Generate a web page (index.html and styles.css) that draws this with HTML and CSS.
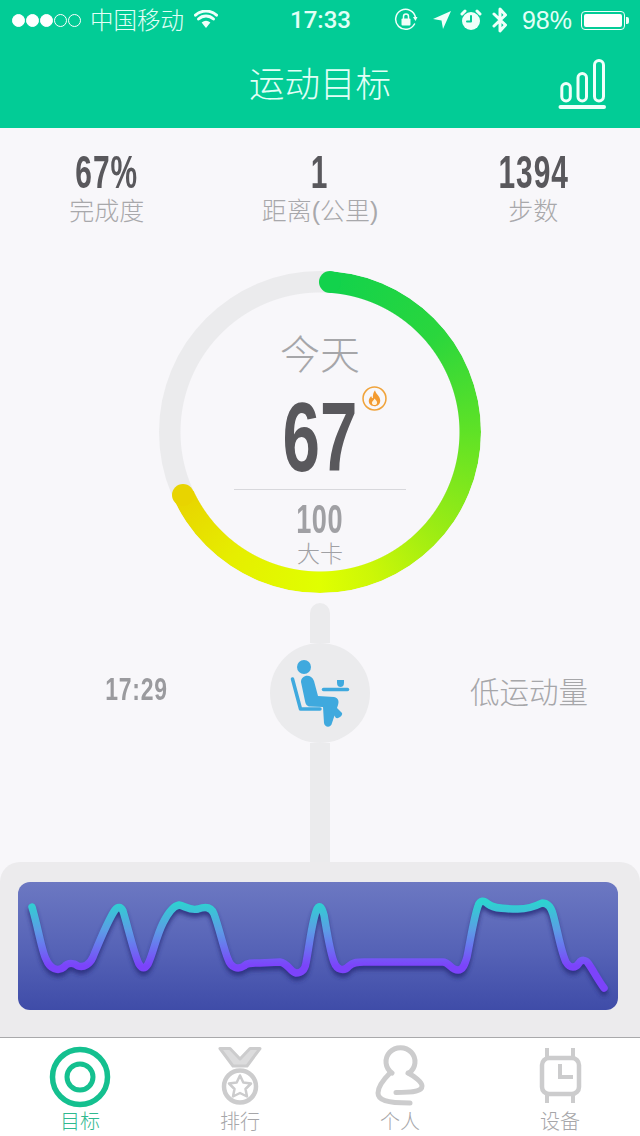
FILE: index.html
```html
<html>
<head>
  <title>运动目标</title>
  <meta charset="utf-8">
  <link rel="stylesheet" href="styles.css">
</head>
<body>
  <div class="page">
    <div class="top">
      <div class="status">
        <div class="status-left">
          <span class="dot on"></span><span class="dot on"></span><span class="dot on"></span><span class="dot"></span><span class="dot"></span>
          <span class="carrier">中国移动</span>
          <svg class="wifi" viewBox="0 0 24 18"><path d="M12 18 L7.6 12.6 A7 7 0 0 1 16.400 12.600 Z"/><path class="line" d="M4.500 9 A11 11 0 0 1 19.500 9"/><path class="line" d="M1.500 5.200 A15.500 15.500 0 0 1 22.500 5.200"/></svg>
        </div>
        <div class="clock">17:33</div>
        <div class="status-right">
          <svg class="st-icon st-rotate" width="24" height="24" viewBox="0 0 24 24"><path class="line thin" d="M20.500 16 A10 10 0 1 1 21.500 9.500"/><path d="M23.500 9 L19 9 L21.500 13 Z"/><rect x="7.500" y="10.500" width="9" height="7" rx="1"/><path class="line thin" d="M9.500 10.500 V8.500 A2.500 2.500 0 0 1 14.500 8.500 V10.500"/></svg>
          <svg class="st-icon st-arrow" width="20" height="20" viewBox="0 0 20 20"><path d="M19 1 L11 19 L9.500 10.500 L1 9 Z"/></svg>
          <svg class="st-icon st-alarm" width="22" height="22" viewBox="0 0 22 22"><circle cx="11" cy="12" r="9"/><path class="line teal" d="M11 7 V12.500 H7"/><path class="line" d="M2 5 L5 2 M20 5 L17 2"/></svg>
          <svg class="st-icon st-blue" width="16" height="26" viewBox="0 0 16 26"><path class="line" d="M2 7 L13.500 18 L8 24 V2 L13.500 8 L2 19"/></svg>
          <span class="percent">98%</span>
          <div class="battery"><div class="battery-fill"></div></div>
          <div class="battery-nub"></div>
        </div>
      </div>
      <div class="header">
        <h1>运动目标</h1>
        <svg class="chart-btn" viewBox="558 56 48 54"><rect class="line" x="561.800" y="83.500" width="8.500" height="17.500" rx="4.250"/><rect class="line" x="578" y="73.500" width="8.500" height="27.500" rx="4.250"/><rect class="line" x="594.500" y="60.500" width="9" height="40.500" rx="4.500"/><path class="line bold" d="M560.500 107 H604"/></svg>
      </div>
    </div>

    <div class="stats">
      <div class="stat"><div class="num">67%</div><div class="label">完成度</div></div>
      <div class="stat"><div class="num">1</div><div class="label">距离(公里)</div></div>
      <div class="stat"><div class="num">1394</div><div class="label">步数</div></div>
    </div>

    <div class="ring">
      <div class="ring-arc"></div>
      <div class="cap cap-start"></div>
      <div class="cap cap-end"></div>
      <div class="today">今天</div>
      <div class="big">
        <span class="big-num">67</span>
        <svg class="badge" viewBox="0 0 24 24"><circle class="badge-ring" cx="12" cy="12" r="11"/><path class="flame" d="M12.500 4 C13 7.500 17.500 9.500 17.500 14 C17.500 17.500 15 19.500 12 19.500 C9 19.500 6.500 17.500 6.500 14.500 C6.500 12 8 10.500 8.800 9.500 C9.200 11 9.800 11.500 10.500 11.800 C10.200 9 10.800 6 12.500 4 Z"/><path class="flame-in" d="M12 12 C13 13.500 14.500 14.500 14.500 16 C14.500 17.500 13.300 18.300 12 18.300 C10.700 18.300 9.500 17.500 9.500 16 C9.500 14.500 11.500 14 12 12 Z"/></svg>
      </div>
      <div class="ring-line"></div>
      <div class="goal">100</div>
      <div class="unit">大卡</div>
    </div>

    <div class="timeline">
      <div class="time">17:29</div>
      <div class="track">
        <div class="bar bar-top"></div>
        <div class="node">
          <svg class="sit" viewBox="270 642 100 100">
            <circle cx="304" cy="666" r="7"/>
            <path d="M301 681 C301 674 311 672 314 680 L318 695 L334 696 C339 697 339 701 338 704 L332 722 C331 727 325 727 324 722 L323 706 L310 705.500 C307 705.500 305.500 703 305 700 Z"/>
            <path d="M333 703 L342 712 C343 714 339 718 336 717 L331 710 Z"/>
            <path class="sit-line" d="M292.500 678 L300.500 708 H320"/>
            <path class="sit-line" d="M323.500 688.500 H347.500"/>
            <path d="M337 679 H344 V682 C344 685 342 686 340.500 686 C339 686 337 685 337 682 Z"/>
          </svg>
        </div>
        <div class="bar bar-bottom"></div>
      </div>
      <div class="activity">低运动量</div>
    </div>

    <div class="panel">
      <div class="graph">
        <svg class="graph-svg" viewBox="0 0 600 128">
          <defs>
            <linearGradient id="wave" gradientUnits="userSpaceOnUse" x1="0" y1="20" x2="0" y2="84">
              <stop offset="0" stop-color="#2dd3d0"/>
              <stop offset="0.45" stop-color="#5c9ce6"/>
              <stop offset="1" stop-color="#7c43fb"/>
            </linearGradient>
            <filter id="soft" x="-5%" y="-20%" width="110%" height="140%"><feGaussianBlur stdDeviation="2"/></filter>
          </defs>
          <path class="wave-shadow" filter="url(#soft)" d="M14 25 C20 45 24 70 28 77 C32 87 40 90 46 85 C50 80 56 81 60 84 C66 86 72 82 75 75 C82 58 90 38 97 28 C100 24 103 25 105 29 C110 45 116 72 121 82 C124 87 127 87 130 82 C135 72 138 55 145 41 C150 31 155 24 161 23 C167 24 172 29 180 27 C186 25 193 24 196 32 C201 45 206 68 210 77 C213 86 220 88 226 84 C230 80 236 81 242 81 L262 80 C270 81 272 90 278 91 C284 91 287 87 288 81 C292 60 294 38 299 27 C302 22 304 26 306 33 C309 50 312 70 316 80 C319 88 326 90 331 84 C335 80 340 80 346 80 L425 80 C431 80 433 88 440 88 C445 88 447 82 449 75 C453 55 456 35 460 24 C462 18 466 18 470 22 C476 27 490 27 500 27 C510 27 518 24 524 21 C530 21 533 25 535 32 C540 50 543 70 548 80 C552 87 558 86 561 81 C564 77 568 78 570 81 C575 88 580 98 586 106"/>
          <path class="wave-line" d="M14 25 C20 45 24 70 28 77 C32 87 40 90 46 85 C50 80 56 81 60 84 C66 86 72 82 75 75 C82 58 90 38 97 28 C100 24 103 25 105 29 C110 45 116 72 121 82 C124 87 127 87 130 82 C135 72 138 55 145 41 C150 31 155 24 161 23 C167 24 172 29 180 27 C186 25 193 24 196 32 C201 45 206 68 210 77 C213 86 220 88 226 84 C230 80 236 81 242 81 L262 80 C270 81 272 90 278 91 C284 91 287 87 288 81 C292 60 294 38 299 27 C302 22 304 26 306 33 C309 50 312 70 316 80 C319 88 326 90 331 84 C335 80 340 80 346 80 L425 80 C431 80 433 88 440 88 C445 88 447 82 449 75 C453 55 456 35 460 24 C462 18 466 18 470 22 C476 27 490 27 500 27 C510 27 518 24 524 21 C530 21 533 25 535 32 C540 50 543 70 548 80 C552 87 558 86 561 81 C564 77 568 78 570 81 C575 88 580 98 586 106"/>
        </svg>
      </div>
    </div>

    <div class="tabs">
      <div class="tab active">
        <svg class="tab-icon" viewBox="40 1040 80 72"><circle class="tab-line" cx="80" cy="1077" r="27.500"/><circle class="tab-line inner" cx="80" cy="1077" r="13"/></svg>
        <div class="tab-label">目标</div>
      </div>
      <div class="tab">
        <svg class="tab-icon" viewBox="200 1040 80 72"><path class="tab-line medal" d="M220 1048.500 H230 L240 1059 L250 1048.500 H260 L247 1066 H233 Z"/><circle class="tab-line" cx="240" cy="1086.500" r="16"/><path class="tab-line star" d="M240 1075.500 L243.300 1082.500 L251 1083.500 L245.500 1089 L247 1096.500 L240 1093 L233 1096.500 L234.500 1089 L229 1083.500 L236.700 1082.500 Z"/></svg>
        <div class="tab-label">排行</div>
      </div>
      <div class="tab">
        <svg class="tab-icon" viewBox="360 1040 80 72"><path class="tab-line person" d="M392 1073 A14.500 14 0 1 1 409 1073"/><path class="tab-line person" d="M408 1073 C414 1076 422 1082 422 1086 C422 1091 415 1092.500 396 1092.500"/><path class="tab-line person" d="M390 1073 C384 1079 378 1087 378 1093 C378 1100 386 1103 410 1103"/></svg>
        <div class="tab-label">个人</div>
      </div>
      <div class="tab">
        <svg class="tab-icon" viewBox="520 1040 80 72"><path class="tab-line watch" d="M547 1048 V1058 M573 1048 V1058 M547 1093 V1103 M573 1093 V1103"/><rect class="tab-line" x="542" y="1058" width="37" height="36" rx="7"/><path class="tab-line watch-hand" d="M560 1064 V1077 H573"/></svg>
        <div class="tab-label">设备</div>
      </div>
    </div>
  </div>
</body>
</html>
```

FILE: styles.css
```css
* {
  box-sizing: border-box;
}

body {
  margin: 0;
  background-color: #f8f7fa;
  font-family: "Liberation Sans", "Noto Sans CJK SC", sans-serif;
}

.page {
  width: 640px;
  height: 1136px;
  display: flex;
  flex-direction: column;
  overflow: hidden;
}

.top {
  height: 128px;
  background-color: #02cc96;
  color: #e2fff6;
}

.status {
  height: 40px;
  padding: 0 11px 0 12px;
  display: flex;
  align-items: center;
}

.status-left,
.status-right {
  flex: 1;
  display: flex;
  align-items: center;
}

.status-right {
  justify-content: flex-end;
}

.dot {
  width: 13px;
  height: 13px;
  margin-right: 1px;
  border: 1px solid #fff;
  border-radius: 50%;
}

.dot.on {
  background-color: #fff;
}

.carrier {
  margin: -2px 0 0 8px;
  font-size: 23.500px;
  font-weight: 300;
}

.wifi {
  width: 24px;
  height: 18px;
  margin: -2px 0 0 10px;
  fill: #f0fffa;
}

.line {
  fill: none;
  stroke: #f0fffa;
  stroke-width: 3;
  stroke-linecap: round;
  stroke-linejoin: round;
}

.line.thin {
  stroke-width: 1.500;
}

.line.bold {
  stroke-width: 4;
}

.line.teal {
  stroke: #02cc96;
  stroke-width: 2;
}

.clock {
  font-family: Roboto, sans-serif;
  font-size: 24px;
  font-weight: 500;
}

.st-icon {
  fill: #f0fffa;
}

.st-rotate {
  margin-right: 14px;
}

.st-arrow {
  margin-right: 8px;
}

.st-alarm {
  margin-right: 10px;
}

.st-blue {
  margin-right: 13px;
}

.percent {
  margin: 0 9px 0 1px;
  font-size: 25px;
}

.battery {
  width: 44px;
  height: 19px;
  padding: 2px;
  border: 1px solid #f0fffa;
  border-radius: 4px;
}

.battery-fill {
  height: 100%;
  border-radius: 2px;
  background-color: #fff;
}

.battery-nub {
  width: 3px;
  height: 7px;
  margin-left: 1px;
  border-radius: 0 2px 2px 0;
  background-color: #f0fffa;
}

.header {
  position: relative;
  height: 88px;
  display: flex;
  align-items: center;
  justify-content: center;
}

.header h1 {
  margin: 0 0 6px;
  font-size: 35.500px;
  font-weight: 300;
}

.chart-btn {
  position: absolute;
  left: 558px;
  top: 16px;
  width: 48px;
  height: 54px;
}

.stats {
  height: 143px;
  padding-top: 22px;
  display: grid;
  grid-template-columns: repeat(3, 1fr);
  text-align: center;
}

.num {
  height: 44px;
  font-size: 46px;
  font-weight: bold;
  line-height: 44px;
  letter-spacing: 1.500px;
  color: #59585c;
  transform: scaleX(0.65);
}

.label {
  font-size: 25px;
  font-weight: 300;
  line-height: 34px;
  color: #a8a8ab;
}

.ring {
  position: relative;
  flex: none;
  width: 322px;
  height: 322px;
  margin: 0 auto;
  padding-top: 58px;
  display: flex;
  flex-direction: column;
  align-items: center;
  border-radius: 50%;
  background: radial-gradient(closest-side, #f8f7fa 139px, #ebebed 140px);
}

.ring-arc {
  position: absolute;
  inset: 0;
  border-radius: 50%;
  background: conic-gradient(transparent 4deg, #12d24c 4deg, #2ad63d 50deg, #5fe226 90deg, #9bec14 130deg, #ccf707 160deg, #e0ff00 180deg, #e6ee00 215deg, #e8d400 245deg, transparent 245deg);
  -webkit-mask: radial-gradient(closest-side, transparent 139px, #000 140px);
  mask: radial-gradient(closest-side, transparent 139px, #000 140px);
}

.cap {
  position: absolute;
  width: 22px;
  height: 22px;
  border-radius: 50%;
}

.cap-start {
  left: 160px;
  top: 0;
  background-color: #12d24c;
}

.cap-end {
  left: 13px;
  top: 213px;
  background-color: #e8d400;
}

.today {
  font-size: 40px;
  font-weight: 300;
  line-height: 52px;
  color: #a6a6a9;
}

.big {
  position: relative;
  height: 96px;
  margin-top: 8px;
}

.big-num {
  display: block;
  font-size: 99px;
  font-weight: bold;
  line-height: 96px;
  color: #59585c;
  transform: scaleX(0.68);
}

.badge {
  position: absolute;
  left: 97px;
  top: -3px;
  width: 25px;
  height: 25px;
}

.badge-ring {
  fill: none;
  stroke: #f0a43c;
  stroke-width: 1.500;
}

.flame {
  fill: #f39a30;
}

.flame-in {
  fill: #fff3dd;
}

.ring-line {
  width: 172px;
  height: 1px;
  margin-top: 4px;
  background-color: #d8d8dc;
}

.goal {
  margin-top: 9px;
  font-size: 41px;
  font-weight: bold;
  line-height: 40px;
  letter-spacing: 1px;
  color: #a0a0a4;
  transform: scaleX(0.66);
}

.unit {
  margin-top: 2px;
  font-size: 23px;
  font-weight: 300;
  line-height: 26px;
  color: #a0a0a4;
}

.timeline {
  flex: 1;
  margin-top: 10px;
  display: grid;
  grid-template-columns: 1fr 100px 1fr;
}

.time {
  margin-top: 67px;
  padding-left: 4px;
  height: 40px;
  font-size: 31px;
  font-weight: bold;
  line-height: 40px;
  letter-spacing: 1px;
  text-align: center;
  color: #9a9a9e;
  transform: scaleX(0.74);
}

.activity {
  margin-top: 68px;
  padding-left: 100px;
  height: 44px;
  font-size: 29.500px;
  font-weight: 300;
  line-height: 44px;
  color: #a6a6a9;
}

.track {
  display: flex;
  flex-direction: column;
  align-items: center;
}

.bar {
  width: 20px;
  background-color: #ebebed;
}

.bar-top {
  height: 40px;
  border-radius: 10px 10px 0 0;
}

.bar-bottom {
  flex: 1;
}

.node {
  width: 100px;
  height: 100px;
  border-radius: 50%;
  background-color: #ebebed;
}

.sit {
  display: block;
  width: 100px;
  height: 100px;
  fill: #3fa9de;
}

.sit-line {
  fill: none;
  stroke: #3fa9de;
  stroke-width: 3.500;
  stroke-linecap: round;
  stroke-linejoin: round;
}

.panel {
  height: 175px;
  padding: 20px 22px 27px 18px;
  border-radius: 20px 20px 0 0;
  background-color: #ecebed;
}

.graph {
  height: 128px;
  border-radius: 12px;
  background: linear-gradient(#6c78c2, #5562b6 55%, #3f4ca8);
}

.graph-svg {
  display: block;
  width: 600px;
  height: 128px;
}

.wave-line,
.wave-shadow {
  fill: none;
  stroke-width: 7.500;
  stroke-linecap: round;
  stroke-linejoin: round;
}

.wave-line {
  stroke: url(#wave);
}

.wave-shadow {
  stroke: #262a78;
  opacity: 0.8;
  transform: translateY(4px);
}

.tabs {
  height: 99px;
  display: grid;
  grid-template-columns: repeat(4, 1fr);
  border-top: 1px solid #a9a9ab;
  background-color: #fff;
}

.tab {
  padding-top: 2px;
  display: flex;
  flex-direction: column;
  align-items: center;
  color: #a6a6a9;
}

.tab-icon {
  display: block;
  width: 80px;
  height: 72px;
}

.tab-line {
  fill: none;
  stroke: #cccccd;
  stroke-width: 4.500;
  stroke-linecap: round;
  stroke-linejoin: round;
}

.tab.active {
  color: #2fb98f;
}

.tab.active .tab-line {
  stroke: #14c08f;
  stroke-width: 5.500;
}

.tab.active .tab-line.inner {
  stroke-width: 5;
}

.tab-line.medal {
  stroke-width: 3;
  fill: #dcdcdd;
}

.tab-line.star {
  stroke-width: 2.500;
}

.tab-line.person {
  stroke-width: 5;
}

.tab-line.watch {
  stroke-width: 4;
  stroke-linecap: butt;
}

.tab-line.watch-hand {
  stroke-width: 4;
  stroke-linecap: butt;
  stroke-linejoin: miter;
}

.tab-label {
  margin-top: -2px;
  font-size: 20px;
  font-weight: 300;
  line-height: 24px;
}
```
